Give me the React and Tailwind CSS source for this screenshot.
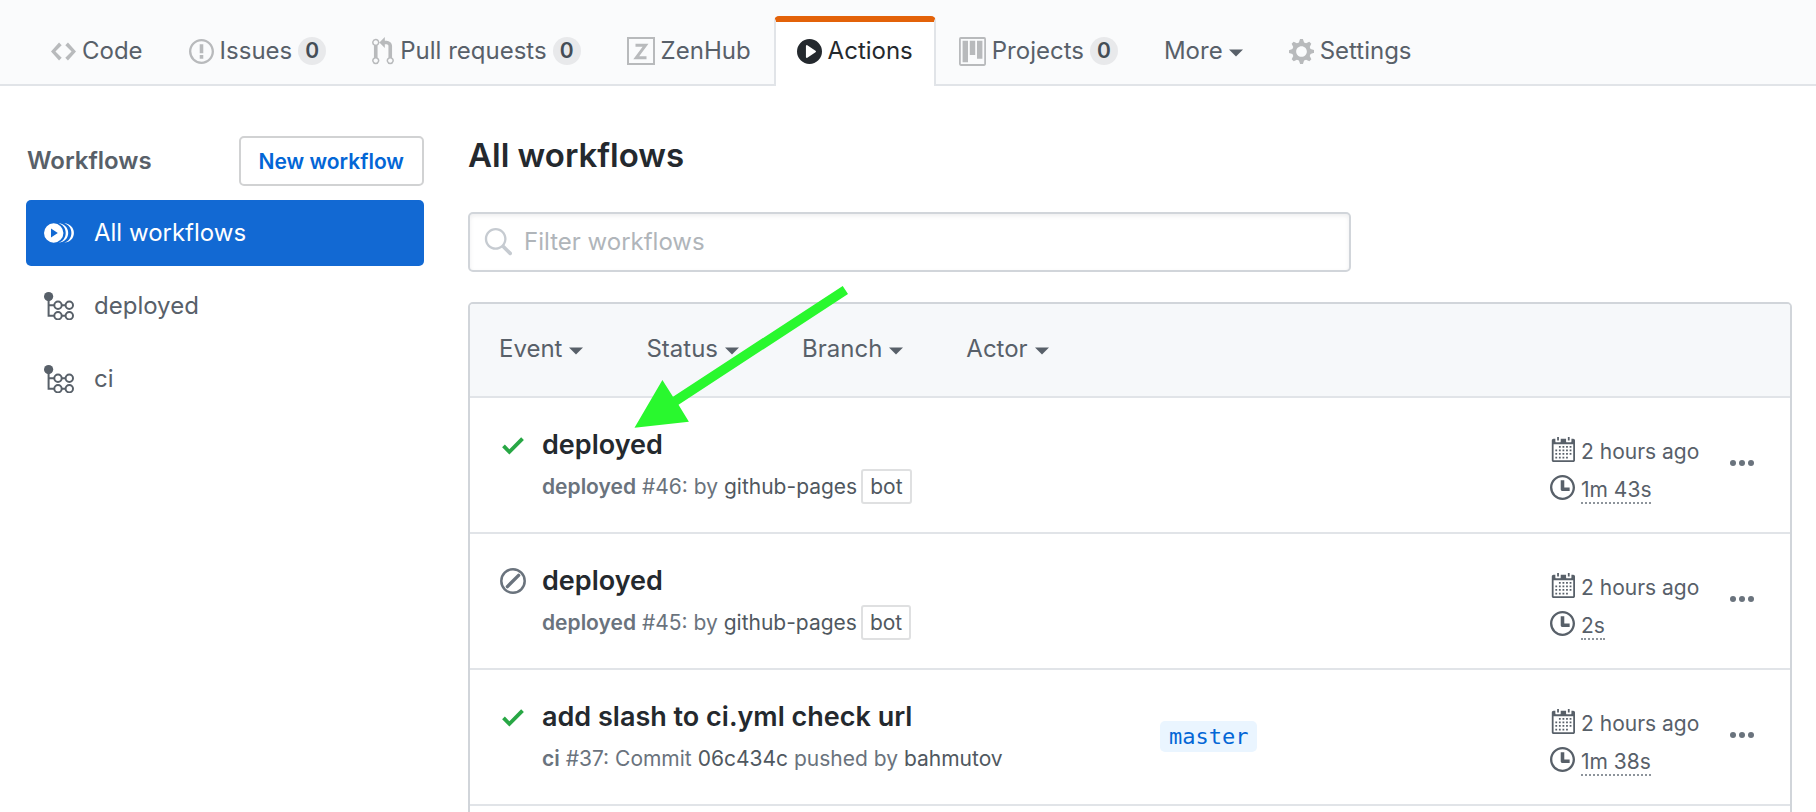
const PATHS = {
  code: "M9.5 3L8 4.5 11.5 8 8 11.5 9.5 13 14 8 9.5 3zm-5 0L0 8l4.5 5L6 11.5 2.5 8 6 4.5 4.5 3z",
  issue:
    "M7 2.3c3.14 0 5.7 2.56 5.7 5.7s-2.56 5.7-5.7 5.7A5.71 5.71 0 0 1 1.3 8c0-3.14 2.56-5.7 5.7-5.7zM7 1C3.14 1 0 4.14 0 8s3.14 7 7 7 7-3.14 7-7-3.14-7-7-7zm1 3H6v5h2V4zm0 6H6v2h2v-2z",
  pull:
    "M11 11.28V5c-.03-.78-.34-1.47-.94-2.06C9.46 2.35 8.78 2.03 8 2H7V0L4 3l3 3V4h1c.27.02.48.11.69.31.21.2.3.42.31.69v6.28A1.993 1.993 0 0 0 10 15a1.993 1.993 0 0 0 1-3.72zm-1 2.92c-.66 0-1.2-.55-1.2-1.2 0-.65.55-1.2 1.2-1.2.65 0 1.2.55 1.2 1.2 0 .65-.55 1.2-1.2 1.2zM4 3c0-1.11-.89-2-2-2a1.993 1.993 0 0 0-1 3.72v6.56A1.993 1.993 0 0 0 2 15a1.993 1.993 0 0 0 1-3.72V4.72c.59-.34 1-.98 1-1.72zm-.8 10c0 .66-.55 1.2-1.2 1.2-.65 0-1.2-.55-1.2-1.2 0-.65.55-1.2 1.2-1.2.65 0 1.2.55 1.2 1.2zM2 4.2C1.34 4.2.8 3.65.8 3c0-.65.55-1.2 1.2-1.2.65 0 1.2.55 1.2 1.2 0 .65-.55 1.2-1.2 1.2z",
  play:
    "M14 8A7 7 0 1 1 0 8a7 7 0 0 1 14 0zm-8.223 3.482l4.599-3.066a.5.5 0 0 0 0-.832L5.777 4.518A.5.5 0 0 0 5 4.934v6.132a.5.5 0 0 0 .777.416z",
  project:
    "M10 12h3V2h-3v10zm-4-2h3V2H6v8zm-4 4h3V2H2v12zm-1 1h13V1H1v14zM14 0H1a1 1 0 0 0-1 1v14a1 1 0 0 0 1 1h13a1 1 0 0 0 1-1V1a1 1 0 0 0-1-1z",
  gear:
    "M14 8.77v-1.6l-1.94-.64-.45-1.09.88-1.84-1.13-1.13-1.81.91-1.09-.45-.69-1.92h-1.6l-.63 1.94-1.11.45-1.84-.88-1.13 1.13.91 1.81-.45 1.09L0 7.23v1.59l1.94.64.45 1.09-.88 1.84 1.13 1.13 1.81-.91 1.09.45.69 1.92h1.59l.63-1.94 1.11-.45 1.84.88 1.13-1.13-.92-1.81.47-1.09L14 8.75v.02zM7 11c-1.66 0-3-1.34-3-3s1.34-3 3-3 3 1.34 3 3-1.34 3-3 3z",
  check: "M12 5l-8 8-4-4 1.5-1.5L4 10l6.5-6.5L12 5z",
  search:
    "M15.7 13.3l-3.81-3.83A5.93 5.93 0 0 0 13 6c0-3.31-2.69-6-6-6S1 2.69 1 6s2.69 6 6 6c1.3 0 2.48-.41 3.47-1.11l3.83 3.81c.19.2.45.3.7.3.25 0 .52-.09.7-.3a.996.996 0 0 0 0-1.41v.01zM7 10.7c-2.59 0-4.7-2.11-4.7-4.7 0-2.59 2.11-4.7 4.7-4.7 2.59 0 4.7 2.11 4.7 4.7 0 2.59-2.11 4.7-4.7 4.7z",
  calendar:
    "M13 2h-1v1.5c0 .28-.22.5-.5.5h-2c-.28 0-.5-.22-.5-.5V2H6v1.5c0 .28-.22.5-.5.5h-2c-.28 0-.5-.22-.5-.5V2H2c-.55 0-1 .45-1 1v11c0 .55.45 1 1 1h11c.55 0 1-.45 1-1V3c0-.55-.45-1-1-1zm0 12H2V5h11v9zM5 3H4V1h1v2zm6 0h-1V1h1v2zM5 6h1v1H5zM7 6h1v1H7zM9 6h1v1H9zM11 6h1v1h-1zM3 8h1v1H3zM5 8h1v1H5zM7 8h1v1H7zM9 8h1v1H9zM11 8h1v1h-1zM3 10h1v1H3zM5 10h1v1H5zM7 10h1v1H7zM9 10h1v1H9zM11 10h1v1h-1zM3 12h1v1H3zM5 12h1v1H5zM7 12h1v1H7zM9 12h1v1H9z",
  clock:
    "M8 8h3v2H7c-.55 0-1-.45-1-1V4h2v4zM7 2.3c3.14 0 5.7 2.56 5.7 5.7s-2.56 5.7-5.7 5.7A5.71 5.71 0 0 1 1.3 8c0-3.14 2.56-5.7 5.7-5.7zM7 1C3.14 1 0 4.14 0 8s3.14 7 7 7 7-3.14 7-7-3.14-7-7-7z",
};

function Icon({ name, units = 14, className = "w-[25px]" }) {
  return (
    <svg viewBox={`0 0 ${units} 16`} className={`h-[29px] shrink-0 ${className}`} fill="currentColor" fillRule="evenodd" aria-hidden="true">
      <path d={PATHS[name]} />
    </svg>
  );
}

function ZenHubIcon() {
  return (
    <svg viewBox="0 0 28 28" className="size-7 shrink-0" fill="none" stroke="currentColor" aria-hidden="true">
      <rect x="1" y="1" width="26" height="26" strokeWidth="2" />
      <path d="M8.5 8.3h10L9.3 20.7h10.2" strokeWidth="3" />
    </svg>
  );
}

function SkippedIcon() {
  return (
    <svg viewBox="0 0 26 26" className="size-[26px] shrink-0 text-[#6a737d]" fill="none" stroke="currentColor" role="img" aria-label="Skipped">
      <circle cx="13" cy="13" r="11.7" strokeWidth="2.5" />
      <path d="M7.4 18.6L18.6 7.4" strokeWidth="3.4" strokeLinecap="round" />
    </svg>
  );
}

function AllRunsIcon() {
  return (
    <svg viewBox="0 0 30 20" className="h-5 w-[30px] shrink-0" fill="currentColor" aria-hidden="true">
      <path fillRule="evenodd" d="M9.7.3a9.7 9.7 0 1 1 0 19.4 9.7 9.7 0 0 1 0-19.4zM7 5.6v8.8l6.8-4.4z" />
      <path d="M14.6.3c6 .5 9.6 4.7 9.6 9.7s-3.6 9.2-9.6 9.7c4.6-1.5 7.1-5.3 7.1-9.7S19.2 1.8 14.6.3z" />
      <path d="M20.3.3c6 .5 9.6 4.7 9.6 9.7s-3.6 9.2-9.6 9.7c4.6-1.5 7.1-5.3 7.1-9.7S24.9 1.8 20.3.3z" />
    </svg>
  );
}

function WorkflowIcon() {
  return (
    <svg viewBox="0 0 30 28" className="h-7 w-[30px] shrink-0" fill="none" stroke="currentColor" strokeWidth="2" aria-hidden="true">
      <circle cx="4.6" cy="4.6" r="4.6" fill="currentColor" stroke="none" />
      <path d="M4.6 5v18.7H10M4.6 13.2H10M18 13.2h3M18 23.7h3" />
      <circle cx="14" cy="13.2" r="3.7" />
      <circle cx="25.3" cy="13.2" r="3.7" />
      <circle cx="14" cy="23.7" r="3.7" />
      <circle cx="25.3" cy="23.7" r="3.7" />
    </svg>
  );
}

function Caret() {
  return (
    <svg viewBox="0 0 14 8" className="mt-1 h-2 w-3.5 shrink-0" fill="currentColor" aria-hidden="true">
      <path d="M0 .5h14L7 7.5z" />
    </svg>
  );
}

function Tab({ icon, label, count, caret, active }) {
  const state = active
    ? "border-x-[#e1e4e8] border-t-[#e36209] bg-white text-[#24292e]"
    : "border-transparent text-[#586069]";
  return (
    <a
      href="#"
      aria-current={active ? "page" : undefined}
      className={`flex h-[70px] items-center gap-1.5 rounded-t-[5px] border-x-2 border-t-[6px] px-[21px] pb-1.5 text-[24px] leading-9 whitespace-nowrap ${state}`}
    >
      {icon && <span className={active ? "" : "text-[#b8babc]"}>{icon}</span>}
      {label}
      {count !== undefined && (
        <span className="flex size-7 items-center justify-center rounded-full bg-[#e8e9eb] text-[21px] leading-7 font-semibold text-[#444d56]">
          {count}
        </span>
      )}
      {caret && <Caret />}
    </a>
  );
}

function SideItem({ icon, label, active }) {
  return (
    <a
      href="#"
      className={`flex h-[66px] items-center gap-5 rounded-[5px] px-[18px] text-[24px] leading-9 ${
        active ? "bg-[#1269d3] text-white" : "text-[#586069]"
      }`}
    >
      {icon}
      {label}
    </a>
  );
}

function Bot() {
  return <span className="ml-1 rounded-[3px] border-2 border-[#dfe0e1] px-[7px] py-[3px]">bot</span>;
}

const RUNS = [
  { ok: true, title: "deployed", name: "deployed", detail: "#46: by ", actor: "github-pages", bot: true, took: "1m 43s" },
  { ok: false, title: "deployed", name: "deployed", detail: "#45: by ", actor: "github-pages", bot: true, took: "2s" },
  { ok: true, title: "add slash to ci.yml check url", name: "ci", detail: "#37: Commit ", commit: "06c434c", actor: "bahmutov", branch: "master", took: "1m 38s" },
];

function Run({ run }) {
  return (
    <li className="flex h-[136px] items-center border-b-2 border-[#e1e4e8] pr-9 pl-[30px]">
      <div className="flex flex-1 items-start gap-4 pt-0.5">
        <span className="flex h-9 w-[26px] shrink-0 items-center justify-center">
          {run.ok ? <Icon name="check" units={12} className="w-[22px] text-[#28a745]" /> : <SkippedIcon />}
        </span>
        <div className="min-w-0">
          <h2 className="text-[27px] leading-9 font-semibold text-[#24292e]">
            <a href="#">{run.title}</a>
          </h2>
          <p className="mt-1.5 text-[21px] leading-9 whitespace-nowrap text-[#6a737d]">
            <b className="font-semibold">{run.name}</b> {run.detail}
            <span className="text-[#505860]">
              {run.commit && (
                <>
                  <a href="#">{run.commit}</a> <span className="text-[#6a737d]">pushed by</span>{" "}
                </>
              )}
              <a href="#">{run.actor}</a>
              {run.bot && <Bot />}
            </span>
          </p>
        </div>
      </div>
      <div className="w-[390px]">
        {run.branch && (
          <a href="#" className="rounded-[5px] bg-[#eaf5ff] px-[9px] py-[3px] font-['DejaVu_Sans_Mono',monospace] text-[22px] leading-6 text-[#0366d6]">
            {run.branch}
          </a>
        )}
      </div>
      <div className="flex w-[180px] flex-col gap-0.5 pt-1.5 text-[21px] text-[#586069]">
        <span className="flex h-9 items-center gap-1.5">
          <Icon name="calendar" />
          <span className="mt-1.5 leading-6">2 hours ago</span>
        </span>
        <span className="flex h-9 items-center gap-1.5">
          <Icon name="clock" />
          <span className="mt-2 border-b-2 border-dotted border-[#8d949b] leading-6">{run.took}</span>
        </span>
      </div>
      <button type="button" aria-label="Run options" className="mb-1 text-[#6a737d]">
        <svg viewBox="0 0 24 6" className="h-1.5 w-6" fill="currentColor" aria-hidden="true">
          <circle cx="3" cy="3" r="3" />
          <circle cx="12" cy="3" r="3" />
          <circle cx="21" cy="3" r="3" />
        </svg>
      </button>
    </li>
  );
}

export default function App() {
  return (
    <div className="h-screen overflow-hidden bg-white font-[Inter,'Liberation_Sans',sans-serif]">
      <nav aria-label="Repository" className="bg-[#fafbfc] pt-4 shadow-[inset_0_-2px_0_#e1e4e8]">
        <div className="flex pl-7">
          <Tab icon={<Icon name="code" />} label="Code" />
          <Tab icon={<Icon name="issue" />} label="Issues" count={0} />
          <Tab icon={<Icon name="pull" units={12} className="w-[22px]" />} label="Pull requests" count={0} />
          <Tab icon={<ZenHubIcon />} label="ZenHub" />
          <Tab active icon={<Icon name="play" />} label="Actions" />
          <Tab icon={<Icon name="project" units={15} className="w-[27px]" />} label="Projects" count={0} />
          <Tab label="More" caret />
          <Tab icon={<Icon name="gear" />} label="Settings" />
        </div>
      </nav>

      <div className="flex gap-11 pr-6 pl-[26px]">
        <aside className="w-[398px] shrink-0 pt-[50px]">
          <div className="mb-3.5 flex items-center justify-between pl-px">
            <h2 className="text-[24px] leading-9 font-semibold text-[#586069]">Workflows</h2>
            <button type="button" className="h-[50px] rounded-[5px] border-2 border-[#d1d2d3] px-[18px] pt-0.5 text-[21px] font-semibold text-[#0366d6]">
              New workflow
            </button>
          </div>
          <nav aria-label="Workflows" className="flex flex-col gap-[7px]">
            <SideItem active icon={<AllRunsIcon />} label="All workflows" />
            <SideItem icon={<WorkflowIcon />} label="deployed" />
            <SideItem icon={<WorkflowIcon />} label="ci" />
          </nav>
        </aside>

        <main className="relative min-w-0 flex-1 pt-11">
          <h1 className="text-[33px] leading-[50px] font-semibold text-[#24292e]">All workflows</h1>
          <label className="mt-8 flex h-[60px] w-2/3 items-center gap-3 rounded-[5px] border-2 border-[#d1d5da] px-[13px] text-[#c6cbd1] shadow-[inset_0_2px_4px_rgba(27,31,35,0.075)]">
            <Icon name="search" units={16} className="w-[29px]" />
            <input
              type="text"
              aria-label="Filter workflows"
              placeholder="Filter workflows"
              className="min-w-0 flex-1 bg-transparent text-[24px] text-[#24292e] outline-none placeholder:text-[#b0b5ba]"
            />
          </label>

          <section className="mt-[30px] rounded-[5px] border-2 border-[#d1d5da]">
            <div className="flex h-[94px] items-center gap-[63px] rounded-t-[3px] border-b-2 border-[#e1e4e8] bg-[#f6f8fa] px-[29px] pb-0.5 text-[24px] leading-9 text-[#586069]">
              {["Event", "Status", "Branch", "Actor"].map((label) => (
                <button key={label} type="button" className="flex items-center gap-[7px]">
                  {label}
                  <Caret />
                </button>
              ))}
            </div>
            <ul>
              {RUNS.map((run) => (
                <Run key={run.detail} run={run} />
              ))}
              <li className="h-[136px]" />
            </ul>
          </section>

          <svg viewBox="0 0 216 144" className="pointer-events-none absolute top-[200px] left-[166px] h-36 w-[216px]" fill="#29f82e" aria-hidden="true">
            <path d="M.5 141.700L28.400 94l10.600 16.700L208.700 0l5.300 8L44.500 118.700l10.400 17z" />
          </svg>
        </main>
      </div>
    </div>
  );
}
